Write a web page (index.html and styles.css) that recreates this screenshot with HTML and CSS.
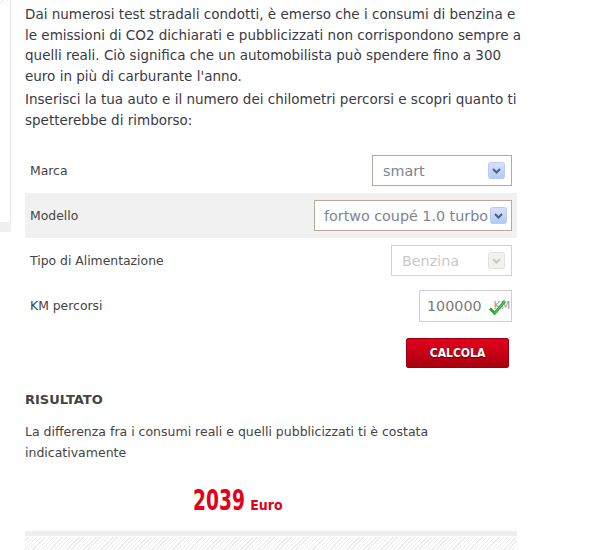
FILE: index.html
```html
<!DOCTYPE html>
<html lang="it">
<head>
    <meta charset="UTF-8">
    <title>Calcola il rimborso</title>
    <link rel="stylesheet" href="styles.css">
</head>
<body>
    <div class="page">
        <div class="edge">
            <div class="edge-line"></div>
            <div class="edge-foot"></div>
        </div>

        <div class="content">
            <p class="intro">Dai numerosi test stradali condotti, è emerso che i consumi di benzina e<br>
                le emissioni di CO2 dichiarati e pubblicizzati non corrispondono sempre a<br>
                quelli reali. Ciò significa che un automobilista può spendere fino a 300<br>
                euro in più di carburante l'anno.</p>
            <p class="intro second">Inserisci la tua auto e il numero dei chilometri percorsi e scopri quanto ti<br>
                spetterebbe di rimborso:</p>

            <div class="form">
                <div class="row">
                    <span class="label">Marca</span>
                    <div class="select marca">
                        <span class="value">smart</span>
                        <svg class="arrow" width="17" height="17" viewBox="0 0 17 17">
                            <defs>
                                <linearGradient id="blue" x1="0" y1="0" x2="0" y2="1">
                                    <stop offset="0" stop-color="#d6e2fd"/>
                                    <stop offset="1" stop-color="#b4c9f5"/>
                                </linearGradient>
                            </defs>
                            <rect x="0.5" y="0.5" width="16" height="16" rx="2" fill="url(#blue)" stroke="#b9cbef"/>
                            <path d="M5 7 L8.5 10.5 L12 7" fill="none" stroke="#4d5f86" stroke-width="2"/>
                        </svg>
                    </div>
                </div>
                <div class="row shaded">
                    <span class="label">Modello</span>
                    <div class="select modello">
                        <span class="value">fortwo coupé 1.0 turbo</span>
                        <svg class="arrow" width="17" height="17" viewBox="0 0 17 17">
                            <rect x="0.5" y="0.5" width="16" height="16" rx="2" fill="url(#blue)" stroke="#b9cbef"/>
                            <path d="M5 7 L8.5 10.5 L12 7" fill="none" stroke="#4d5f86" stroke-width="2"/>
                        </svg>
                    </div>
                </div>
                <div class="row">
                    <span class="label">Tipo di Alimentazione</span>
                    <div class="select alimentazione disabled">
                        <span class="value">Benzina</span>
                        <svg class="arrow" width="17" height="17" viewBox="0 0 17 17">
                            <rect x="0.5" y="0.5" width="16" height="16" rx="2" fill="#f1f1ed" stroke="#e2e2dc"/>
                            <path d="M5 7 L8.5 10.5 L12 7" fill="none" stroke="#c9c9c4" stroke-width="2"/>
                        </svg>
                    </div>
                </div>
                <div class="row">
                    <span class="label">KM percorsi</span>
                    <div class="km">
                        <span class="value">100000</span>
                        <span class="unit">KM</span>
                        <svg class="check" width="17" height="17" viewBox="0 0 18 18">
                            <path d="M1 10 L6 15 L17 2" fill="none" stroke="#1fa62c" stroke-width="3"/>
                            <path d="M6 15 L17 2" fill="none" stroke="#7ed27e" stroke-width="1"/>
                        </svg>
                    </div>
                </div>
                <div class="actions">
                    <button class="calcola">CALCOLA</button>
                </div>
            </div>

            <h2 class="result-title">RISULTATO</h2>
            <p class="result-text">La differenza fra i consumi reali e quelli pubblicizzati ti è costata indicativamente</p>
            <div class="amount"><span class="number">2039</span> <span class="currency">Euro</span></div>

            <div class="bar"></div>
            <div class="hatch"></div>
        </div>
    </div>
</body>
</html>
```

FILE: styles.css
```css
body {
    margin: 0;
    font-family: "DejaVu Sans", Verdana, sans-serif;
    color: #3b3b3b;
    background-color: #fff;
}

.page {
    display: flex;
    align-items: flex-start;
}

.edge {
    width: 11px;
    flex-shrink: 0;
}

.edge-line {
    height: 222px;
    border-right: 1px solid #e4e4e4;
    background: repeating-linear-gradient(135deg, #fff 0, #fff 2px, #f3f3f3 2px, #f3f3f3 3px) top / 100% 5px no-repeat;
}

.edge-foot {
    height: 10px;
    background-color: #f0f0f0;
}

.content {
    width: 492px;
    margin-left: 14px;
    padding-top: 4px;
}

.intro {
    width: 560px;
    margin: 0;
    font-size: 13.5px;
    line-height: 20.5px;
    color: #3a3a44;
    white-space: nowrap;
}

.intro.second {
    margin-top: 3px;
}

.form {
    margin-top: 18px;
}

.row {
    display: flex;
    align-items: center;
    justify-content: space-between;
    height: 45px;
    padding: 0 5px;
}

.row.shaded {
    background-color: #f1f1f1;
}

.label {
    font-size: 12.4px;
    color: #444;
}

.select {
    display: flex;
    align-items: center;
    justify-content: space-between;
    box-sizing: border-box;
    height: 31px;
    padding: 0 6px 0 10px;
    border: 1px solid #b5a89c;
    background-color: #fff;
    font-size: 14.3px;
    color: #7a8594;
    white-space: nowrap;
    overflow: hidden;
}

.select.marca {
    width: 140px;
}

.select.modello {
    width: 198px;
    padding: 0 4px 0 9px;
}

.select.alimentazione {
    width: 121px;
}

.select.disabled {
    border-color: #d2d2d2;
    color: #c9c9c9;
}

.arrow {
    flex-shrink: 0;
}

.km {
    position: relative;
    display: flex;
    align-items: center;
    box-sizing: border-box;
    width: 93px;
    height: 32px;
    padding-left: 7px;
    border: 1px solid #cfcfcf;
    font-size: 14.3px;
    color: #7a7a7a;
    white-space: nowrap;
    overflow: hidden;
}

.km .unit {
    margin-left: 12px;
    font-size: 11px;
    color: #9a9a9a;
}

.km .check {
    position: absolute;
    left: 69px;
    top: 8px;
}

.actions {
    display: flex;
    justify-content: flex-end;
    padding: 10px 8px 0 0;
}

.calcola {
    width: 103px;
    height: 30px;
    border: 1px solid #9c0010;
    border-radius: 2px;
    background: linear-gradient(#e3001d, #c00014 60%, #a8000e);
    color: #fff;
    font-family: "DejaVu Sans Condensed", "DejaVu Sans", sans-serif;
    font-size: 12px;
    font-weight: bold;
    text-shadow: 0 1px 1px rgba(0, 0, 0, 0.5);
    cursor: pointer;
}

.result-title {
    margin: 22px 0 0;
    font-size: 13px;
    line-height: 20px;
    color: #444;
}

.result-text {
    max-width: 440px;
    margin: 11px 0 0;
    font-size: 12.5px;
    line-height: 21px;
    color: #444;
}

.amount {
    margin-top: 23px;
    padding-left: 168px;
    color: #e2001a;
    font-family: "DejaVu Sans Condensed", "DejaVu Sans", sans-serif;
    font-weight: bold;
    line-height: 30px;
}

.amount .number {
    display: inline-block;
    margin-right: -18px;
    font-size: 28px;
    transform: scaleX(0.74);
    transform-origin: left;
}

.amount .currency {
    font-size: 14px;
}

.bar {
    height: 5px;
    margin-top: 11px;
    background-color: #eee;
}

.hatch {
    height: 20px;
    margin-top: 1px;
    background: repeating-linear-gradient(135deg, #fff 0, #fff 2px, #ececec 2px, #ececec 3px);
}
```
